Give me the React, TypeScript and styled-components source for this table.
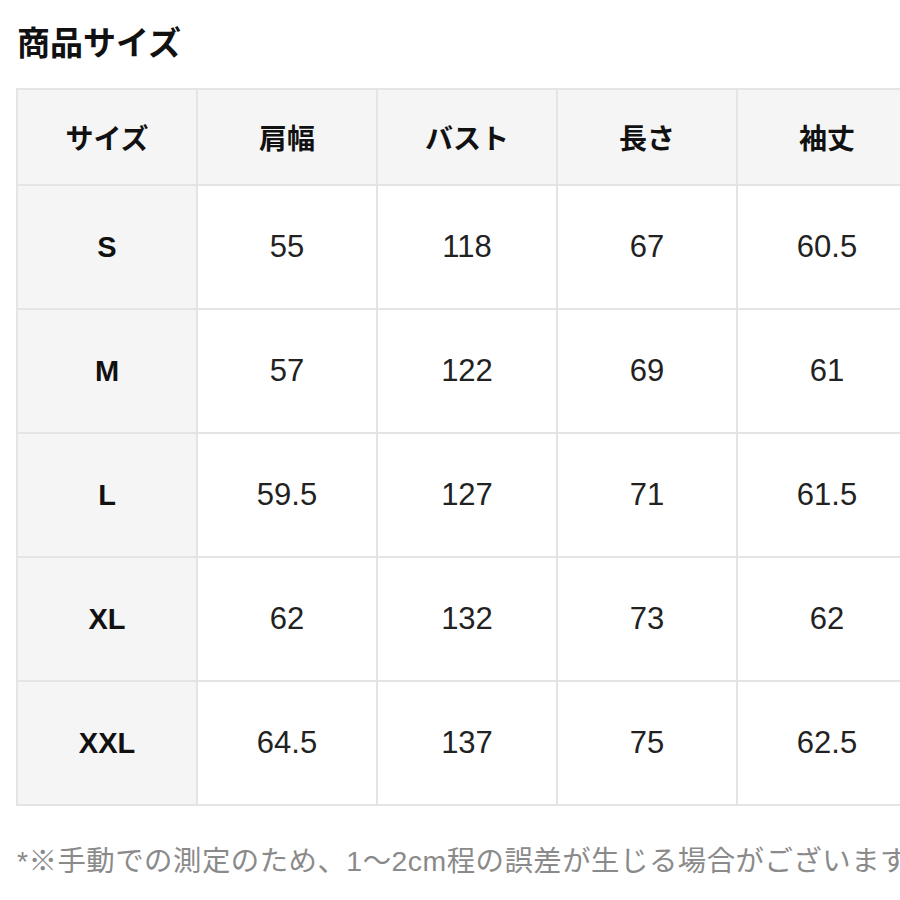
import React from 'react';
import styled, { createGlobalStyle } from 'styled-components';

const GlobalStyle = createGlobalStyle`
  html, body {
    margin: 0;
    padding: 0;
    background: #ffffff;
    overflow: hidden;
  }
  body {
    font-family: "Liberation Sans", "Noto Sans CJK JP", sans-serif;
    color: #111111;
  }
`;

const Page = styled.div`
  width: 900px;
  height: 900px;
  overflow: hidden;
  padding: 18px 0 0 16px;
  box-sizing: border-box;
`;

const Title = styled.h2`
  margin: 0 0 0 1px;
  font-family: "Noto Sans CJK JP", sans-serif;
  font-size: 33px;
  font-weight: 700;
  line-height: 46px;
  color: #111111;
`;

const Table = styled.div`
  margin-top: 24px;
  display: grid;
  grid-template-columns: repeat(5, 178px);
  grid-template-rows: 94px repeat(5, 122px);
  gap: 2px;
  padding: 2px;
  width: max-content;
  background: #e4e4e4;
`;

interface CellProps {
  $shaded?: boolean;
}

const Cell = styled.div<CellProps>`
  display: flex;
  align-items: center;
  justify-content: center;
  background: ${props => (props.$shaded ? '#f5f5f5' : '#ffffff')};
`;

const HeadCell = styled(Cell)`
  font-family: "Noto Sans CJK JP", sans-serif;
  font-size: 28px;
  font-weight: 700;
  color: #111111;
`;

const SizeCell = styled(Cell)`
  font-size: 29px;
  font-weight: 700;
  color: #111111;
`;

const ValueCell = styled(Cell)`
  font-size: 31px;
  font-weight: 400;
  color: #222222;
`;

const Note = styled.p`
  margin: 35px 0 0 1px;
  font-family: "Liberation Sans", "Noto Sans CJK JP", sans-serif;
  font-size: 28.4px;
  line-height: 40px;
  letter-spacing: 0.5px;
  color: #8a8a8a;
  white-space: nowrap;
`;

const headers = ['サイズ', '肩幅', 'バスト', '長さ', '袖丈'];

const rows: [string, string, string, string, string][] = [
  ['S', '55', '118', '67', '60.5'],
  ['M', '57', '122', '69', '61'],
  ['L', '59.5', '127', '71', '61.5'],
  ['XL', '62', '132', '73', '62'],
  ['XXL', '64.5', '137', '75', '62.5'],
];

const App = () => {
  return (
    <>
      <GlobalStyle />
      <Page>
        <Title>商品サイズ</Title>
        <Table>
          {headers.map(h => (
            <HeadCell key={h} $shaded>{h}</HeadCell>
          ))}
          {rows.map(([size, ...values]) => (
            <React.Fragment key={size}>
              <SizeCell $shaded>{size}</SizeCell>
              {values.map((v, i) => (
                <ValueCell key={i}>{v}</ValueCell>
              ))}
            </React.Fragment>
          ))}
        </Table>
        <Note>*※手動での測定のため、1〜2cm程の誤差が生じる場合がございます。</Note>
      </Page>
    </>
  );
};

export default App;
